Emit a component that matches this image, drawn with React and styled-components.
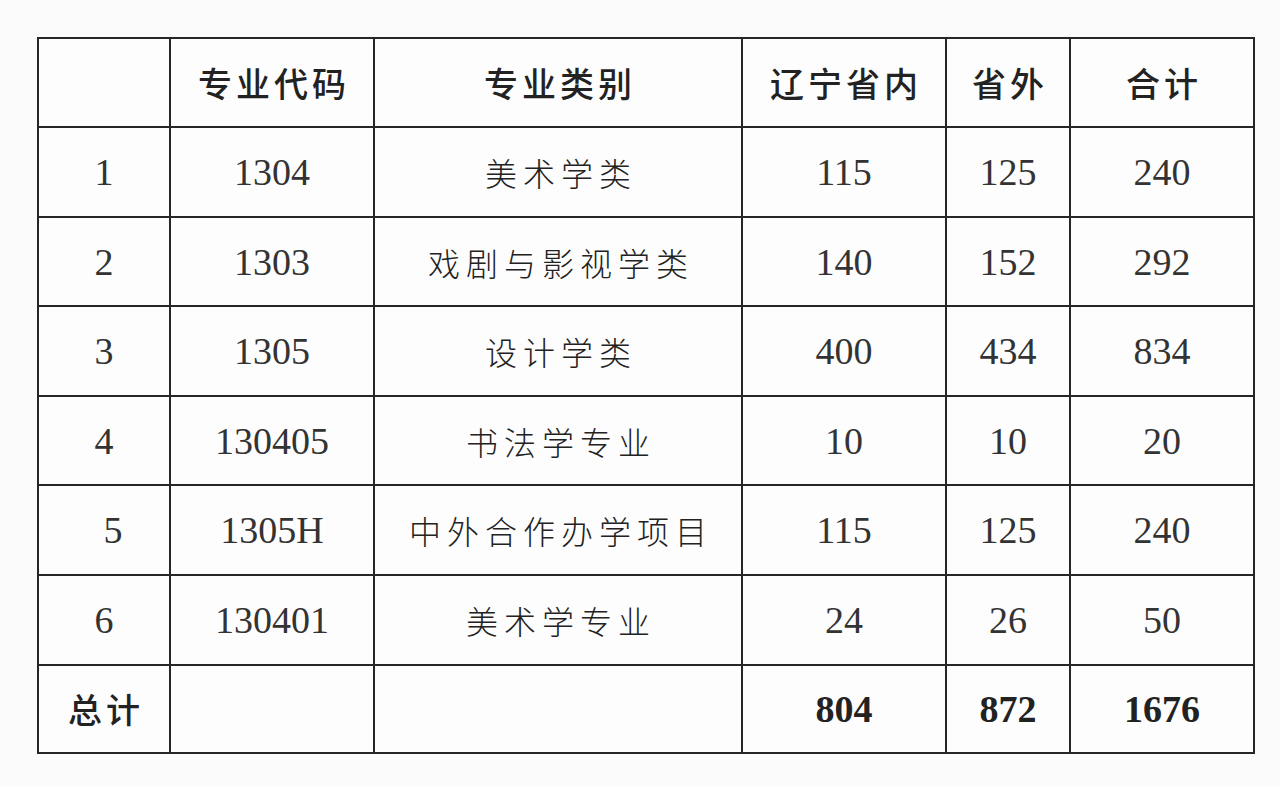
import React from 'react'
import styled, { createGlobalStyle } from 'styled-components'

const GlobalStyle = createGlobalStyle`
  html, body {
    margin: 0;
    padding: 0;
    background: #fbfbfb;
  }
`

const Page = styled.div`
  width: 1280px;
  height: 786px;
  padding: 37px 0 0 37px;
  box-sizing: border-box;
  background: #fbfbfb;
`

const Table = styled.table`
  border-collapse: collapse;
  table-layout: fixed;
  width: 1216px;
  border: 2px solid #262626;
  background: #fdfdfd;
`

const Row = styled.tr`
  height: ${(p) => p.h}px;
`

const Cell = styled.td`
  border: 2px solid #262626;
  padding: 0;
  text-align: center;
  vertical-align: middle;
  color: ${(p) => (p.num && !p.bold ? '#333' : '#222')};
  font-family: ${(p) =>
    p.num
      ? '"Liberation Serif", "DejaVu Serif", serif'
      : '"Noto Sans CJK SC", "Noto Sans", sans-serif'};
  font-size: ${(p) => (p.num ? 38 : p.head ? 34 : 32)}px;
  font-weight: ${(p) => (p.bold ? 700 : p.head ? 500 : 300)};
  letter-spacing: ${(p) => (p.num ? 0 : p.head ? 4 : 6)}px;
  text-indent: ${(p) => (p.num ? 0 : p.head ? 4 : 6)}px;
  padding-left: ${(p) => p.shift || 0}px;
  line-height: 1;
`

const widths = [132, 204, 368, 204, 124, 184]

const heads = ['', '专业代码', '专业类别', '辽宁省内', '省外', '合计']

const rows = [
  ['1', '1304', '美术学类', '115', '125', '240'],
  ['2', '1303', '戏剧与影视学类', '140', '152', '292'],
  ['3', '1305', '设计学类', '400', '434', '834'],
  ['4', '130405', '书法学专业', '10', '10', '20'],
  ['5', '1305H', '中外合作办学项目', '115', '125', '240'],
  ['6', '130401', '美术学专业', '24', '26', '50'],
]

const heights = [90, 89, 90, 89, 90, 90, 90]

const App = () => (
  <Page>
    <GlobalStyle />
    <Table>
      <colgroup>
        {widths.map((w, i) => (
          <col key={i} style={{ width: w }} />
        ))}
      </colgroup>
      <tbody>
        <Row h={89}>
          {heads.map((t, i) => (
            <Cell key={i} head>
              {t}
            </Cell>
          ))}
        </Row>
        {rows.map((r, ri) => (
          <Row key={ri} h={heights[ri]}>
            <Cell num shift={r[0] === '5' ? 18 : 0}>{r[0]}</Cell>
            <Cell num>{r[1]}</Cell>
            <Cell>{r[2]}</Cell>
            <Cell num>{r[3]}</Cell>
            <Cell num>{r[4]}</Cell>
            <Cell num>{r[5]}</Cell>
          </Row>
        ))}
        <Row h={88}>
          <Cell head>总计</Cell>
          <Cell />
          <Cell />
          <Cell num bold>804</Cell>
          <Cell num bold>872</Cell>
          <Cell num bold>1676</Cell>
        </Row>
      </tbody>
    </Table>
  </Page>
)

export default App
